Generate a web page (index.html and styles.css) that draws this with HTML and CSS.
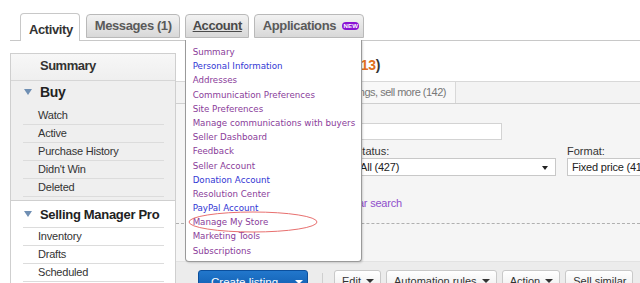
FILE: index.html
```html
<!DOCTYPE html>
<html lang="en">
<head>
    <meta charset="UTF-8">
    <title>My eBay - Selling Manager Pro</title>
    <link rel="stylesheet" href="styles.css">
</head>
<body>
    <!-- Top tabs -->
    <ul class="tabbar">
        <li class="tab active">Activity</li>
        <li class="tab">Messages (1)</li>
        <li class="tab account">
            <span class="tab-link">Account</span>
            <!-- Account dropdown -->
            <div class="menu">
                <a class="visited">Summary</a>
                <a class="fresh">Personal Information</a>
                <a class="visited">Addresses</a>
                <a class="visited">Communication Preferences</a>
                <a class="visited">Site Preferences</a>
                <a class="visited">Manage communications with buyers</a>
                <a class="visited">Seller Dashboard</a>
                <a class="visited">Feedback</a>
                <a class="visited">Seller Account</a>
                <a class="fresh">Donation Account</a>
                <a class="visited">Resolution Center</a>
                <a class="fresh">PayPal Account</a>
                <a class="visited">Manage My Store</a>
                <a class="visited">Marketing Tools</a>
                <a class="visited">Subscriptions</a>
                <svg class="circle" width="132" height="24" viewBox="0 0 132 24">
                    <ellipse cx="66" cy="12" rx="64" ry="10" fill="none" stroke="#e8706f" stroke-width="1"/>
                </svg>
            </div>
        </li>
        <li class="tab apps">Applications <span class="badge">NEW</span></li>
    </ul>

    <div class="page">
        <!-- Left navigation -->
        <div class="sidebar">
            <div class="side-summary">Summary</div>
            <div class="side-group buy">
                <div class="side-head"><span class="arrow"></span>Buy</div>
                <ul class="side-list">
                    <li>Watch</li>
                    <li>Active</li>
                    <li>Purchase History</li>
                    <li>Didn't Win</li>
                    <li>Deleted</li>
                </ul>
            </div>
            <div class="side-group smp">
                <div class="side-head"><span class="arrow"></span>Selling Manager Pro</div>
                <ul class="side-list">
                    <li>Inventory</li>
                    <li>Drafts</li>
                    <li>Scheduled</li>
                    <li>Active</li>
                    <li>Unsold</li>
                </ul>
            </div>
        </div>

        <!-- Main content -->
        <div class="main">
            <h1 class="title">Active listings (<span class="count">413</span>)</h1>
            <div class="subtabs">
                <div class="subtab">Improve listings, sell more (142)</div>
            </div>
            <div class="panel">
                <label class="field-label">Search by title</label>
                <input class="search-input" type="text">
                <div class="filters">
                    <div class="filter filter-site">
                        <label class="field-label">Site:</label>
                        <div class="select">All sites</div>
                    </div>
                    <div class="filter filter-status">
                        <label class="field-label">Status:</label>
                        <div class="select">All (427)<span class="select-arrow"></span></div>
                    </div>
                    <div class="filter filter-format">
                        <label class="field-label">Format:</label>
                        <div class="select">Fixed price (413)<span class="select-arrow"></span></div>
                    </div>
                </div>
                <div class="search-row">
                    <button class="search-btn">Search</button>
                    <a class="clear-link">Clear search</a>
                </div>
            </div>
            <div class="toolbar">
                <button class="create-btn">Create listing <span class="caret white"></span></button>
                <span class="divider"></span>
                <button class="tool-btn">Edit <span class="caret"></span></button>
                <button class="tool-btn">Automation rules <span class="caret"></span></button>
                <button class="tool-btn">Action <span class="caret"></span></button>
                <button class="tool-btn">Sell similar</button>
            </div>
        </div>
    </div>
</body>
</html>
```

FILE: styles.css
```css
html, body {
    margin: 0;
    padding: 0;
    overflow: hidden;
    height: 100%;
}

body {
    font-family: "Liberation Sans", Arial, sans-serif;
    background: #ffffff;
    color: #333;
}

/* Top tabs */
.tabbar {
    list-style: none;
    margin: 0 0 0 10px;
    padding: 14px 0 0 10px;
    display: flex;
    align-items: flex-end;
    gap: 5px;
    border-bottom: 1px solid #c8c8c8;
    height: 26px;
}

.tab {
    position: relative;
    flex-shrink: 0;
    height: 22px;
    line-height: 22px;
    padding: 0 7px 0 8px;
    margin-bottom: 2px;
    font-size: 13px;
    font-weight: bold;
    letter-spacing: -0.4px;
    color: #5a5a5a;
    border: 1px solid #b9b9b9;
    border-radius: 4px 4px 0 0;
    background: linear-gradient(#f2f2f2, #d8d8d8);
}

.tab.active {
    height: 27px;
    line-height: 31px;
    margin-bottom: -1px;
    margin-right: 1px;
    border-color: #c8c8c8;
    border-bottom: none;
    background: #ffffff;
    color: #333;
    padding: 0 6px 0 8px;
}

.tab.account {
    padding: 0 6px 0 7px;
}

.tab.apps {
    padding: 0 4px 0 8px;
}

.tab-link {
    text-decoration: underline;
    color: #4a4a4a;
}

.badge {
    display: inline-block;
    vertical-align: 2px;
    margin-left: 3px;
    width: 17px;
    height: 8px;
    line-height: 8px;
    text-align: center;
    border-radius: 4px;
    background: #8a12d4;
    color: #fff;
    font-size: 6px;
    letter-spacing: 0.2px;
}

/* Account dropdown */
.menu {
    position: absolute;
    top: 25px;
    left: -1px;
    width: 175px;
    height: 216px;
    padding-top: 5px;
    background: #ffffff;
    border: 1px solid #9a9a9a;
    border-top: none;
    border-radius: 0 0 4px 4px;
    box-shadow: 1px 1px 2px rgba(0, 0, 0, 0.15);
    z-index: 10;
    letter-spacing: 0;
}

.menu a {
    display: block;
    padding-left: 7px;
    height: 14.2px;
    line-height: 14px;
    font-family: "DejaVu Sans", Verdana, sans-serif;
    font-size: 8.7px;
    font-weight: normal;
    white-space: nowrap;
}

.menu a.visited {
    color: #8a3c9a;
}

.menu a.fresh {
    color: #3236d4;
}

.circle {
    position: absolute;
    left: 1px;
    top: 170px;
}

/* Layout */
.page {
    display: flex;
    margin-left: 10px;
}

/* Sidebar */
.sidebar {
    width: 164px;
    margin-top: 12px;
    border: 1px solid #cfcfcf;
    flex-shrink: 0;
}

.side-summary {
    height: 26px;
    line-height: 24px;
    padding-left: 29px;
    font-size: 13px;
    font-weight: bold;
    letter-spacing: -0.5px;
    color: #333;
    background: linear-gradient(#f7f7f7, #efefef);
    border-bottom: 1px solid #d6d6d6;
}

.side-group.buy {
    background: #efefef;
    border-bottom: 1px solid #cfcfcf;
    padding-bottom: 3px;
}

.side-head {
    display: flex;
    align-items: center;
    padding-left: 13px;
    font-size: 13px;
    font-weight: bold;
    letter-spacing: -0.3px;
    color: #222;
}

.buy .side-head {
    height: 22px;
    margin-bottom: 4px;
    font-size: 14px;
}

.smp .side-head {
    height: 26px;
}

.arrow {
    width: 0;
    height: 0;
    border-left: 4px solid transparent;
    border-right: 4px solid transparent;
    border-top: 6px solid #6f8fb3;
    margin-right: 8px;
}

.side-list {
    list-style: none;
    margin: 0 11px 0 12px;
    padding: 0;
}

.smp .side-list {
    border-top: 1px solid #dcdcdc;
}

.side-list li {
    height: 17px;
    line-height: 17px;
    padding-left: 15px;
    font-size: 11px;
    letter-spacing: -0.2px;
    color: #333;
    border-bottom: 1px solid #dcdcdc;
}

/* Main column */
.main {
    flex: 1;
    margin-top: 12px;
    min-width: 0;
}

.title {
    margin: 0;
    height: 28px;
    line-height: 25px;
    padding-left: 79px;
    font-size: 14px;
    font-weight: bold;
    letter-spacing: -0.3px;
    color: #333;
    white-space: nowrap;
}

.count {
    color: #e0701e;
}

.subtabs {
    display: flex;
    height: 21px;
    border-top: 1px solid #d8d8d8;
    border-bottom: 1px solid #cfcfcf;
    background: #f3f3f3;
    padding-left: 10px;
}

.subtab {
    box-sizing: border-box;
    width: 270px;
    padding-right: 9px;
    text-align: right;
    line-height: 21px;
    font-size: 11px;
    letter-spacing: -0.5px;
    color: #777;
    background: #f8f8f8;
    border-right: 1px solid #d8d8d8;
    border-left: 1px solid #d8d8d8;
    white-space: nowrap;
}

.panel {
    background: #f5f5f5;
    padding: 5px 0 0 20px;
    height: 152px;
}

.field-label {
    display: block;
    height: 14px;
    line-height: 14px;
    font-size: 11px;
    color: #333;
}

.search-input {
    display: block;
    box-sizing: border-box;
    width: 306px;
    height: 17px;
    margin: 0;
    border: 1px solid #d3d3d3;
    background: #ffffff;
}

.filters {
    display: flex;
    gap: 11px;
    margin-top: 4px;
    white-space: nowrap;
}

.filter {
    flex-shrink: 0;
}

.filter-site {
    width: 148px;
}

.filter-status {
    width: 201px;
}

.filter-format {
    width: 140px;
}

.select {
    position: relative;
    box-sizing: border-box;
    height: 18px;
    line-height: 16px;
    padding-left: 4px;
    font-size: 11px;
    letter-spacing: -0.2px;
    color: #222;
    background: #ffffff;
    border: 1px solid #c8c8c8;
    overflow: hidden;
}

.select-arrow {
    position: absolute;
    right: 7px;
    top: 7px;
    border-left: 3px solid transparent;
    border-right: 3px solid transparent;
    border-top: 4px solid #222;
}

.search-row {
    display: flex;
    align-items: center;
    gap: 16px;
    height: 22px;
    margin-top: 16px;
    padding-bottom: 9px;
    border-bottom: 1px dashed #b0b0b0;
    margin-left: -20px;
    padding-left: 20px;
}

.search-btn {
    flex-shrink: 0;
    width: 130px;
    height: 22px;
    font-family: inherit;
    font-size: 12px;
    border: 1px solid #bbb;
    background: #eee;
}

.clear-link {
    font-size: 11px;
    letter-spacing: -0.2px;
    color: #8f4fcc;
}

/* Bottom toolbar */
.toolbar {
    display: flex;
    align-items: flex-start;
    gap: 5px;
    height: 40px;
    padding: 8px 0 0 22px;
    background: #ececec;
    border-top: 1px solid #e2e2e2;
    white-space: nowrap;
}

.toolbar button {
    flex-shrink: 0;
}

.create-btn {
    width: 110px;
    height: 24px;
    margin-right: 9px;
    padding: 0 0 0 12px;
    text-align: left;
    font-family: inherit;
    font-size: 11.5px;
    color: #ffffff;
    border: 1px solid #0b4f9c;
    border-radius: 3px;
    background: linear-gradient(#2277cc, #0c58ab);
}

.divider {
    width: 1px;
    height: 22px;
    margin: 3px 6px 0 0;
    background: #cfcfcf;
}

.tool-btn {
    height: 22px;
    padding: 0 6px 0 7px;
    font-family: inherit;
    font-size: 11px;
    color: #333;
    border: 1px solid #c9c9c9;
    border-radius: 3px;
    background: linear-gradient(#ffffff, #ececec);
}

.caret {
    display: inline-block;
    vertical-align: 2px;
    margin-left: 2px;
    border-left: 4px solid transparent;
    border-right: 4px solid transparent;
    border-top: 4px solid #333;
}

.caret.white {
    border-top-color: #ffffff;
    margin-left: 14px;
}
```
